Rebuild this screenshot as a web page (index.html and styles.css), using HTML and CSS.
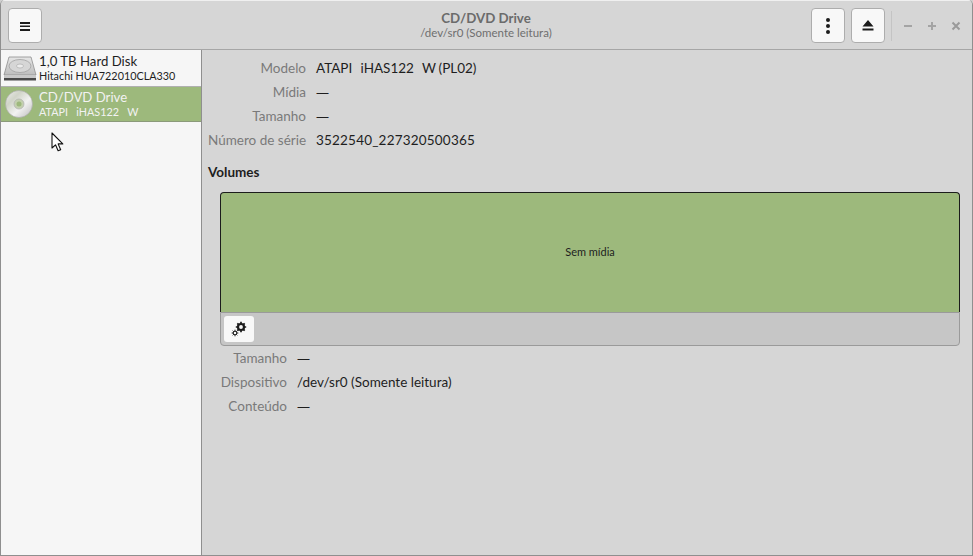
FILE: index.html
```html
<!DOCTYPE html>
<html lang="pt">
<head>
<meta charset="utf-8">
<title>CD/DVD Drive</title>
<link rel="stylesheet" href="styles.css">
</head>
<body>
<div class="window">
  <header class="titlebar">
    <button class="btn">
      <svg width="12" height="12" viewBox="0 0 12 12"><path d="M1 2h10v2H1zM1 5.500h10v1.500H1zM1 9h10v2H1z" fill="#1c1c1c"/></svg>
    </button>
    <div class="title">
      <div class="title-main">CD/DVD Drive</div>
      <div class="title-sub">/dev/sr0 (Somente leitura)</div>
    </div>
    <button class="btn">
      <svg width="6" height="18" viewBox="0 0 6 18"><circle cx="3" cy="3" r="2" fill="#1c1c1c"/><circle cx="3" cy="9" r="2" fill="#1c1c1c"/><circle cx="3" cy="15" r="2" fill="#1c1c1c"/></svg>
    </button>
    <button class="btn">
      <svg width="12" height="11" viewBox="0 0 12 11"><path d="M6 0l5.500 6.500H.500z M.500 8.500h11V10.500H.500z" fill="#1c1c1c"/></svg>
    </button>
    <div class="sep"></div>
    <div class="wm">
      <svg width="10" height="10" viewBox="0 0 10 10"><path d="M1 4h8v2H1z" fill="#a4a4a4"/></svg>
      <svg width="10" height="10" viewBox="0 0 10 10"><path d="M1 4h3V1h2v3h3v2H6v3H4V6H1z" fill="#a4a4a4"/></svg>
      <svg width="10" height="10" viewBox="0 0 10 10"><path d="M1.500 1.500l7 7M8.500 1.500l-7 7" stroke="#9a9a9a" stroke-width="2"/></svg>
    </div>
  </header>
  <div class="body">
    <aside class="sidebar">
      <div class="drive">
        <svg class="drive-icon" width="34" height="28" viewBox="0 0 34 28">
          <defs><linearGradient id="hd" x1="0" y1="0" x2="0" y2="1"><stop offset="0" stop-color="#e6e6e6"/><stop offset="1" stop-color="#bdbdbd"/></linearGradient></defs>
          <path d="M6 3h22l5 18H1z" fill="url(#hd)" stroke="#8e8e8e" stroke-width=".8"/>
          <ellipse cx="17" cy="12" rx="11" ry="6.500" fill="#d6d6d6" stroke="#a2a2a2" stroke-width=".8"/>
          <ellipse cx="17" cy="12" rx="3.500" ry="2" fill="#ececec" stroke="#a2a2a2" stroke-width=".6"/>
          <path d="M1 21h32v4.500H1z" fill="#c8c8c8"/>
          <path d="M1 24h32v2.500H1z" fill="#4a4a4a"/>
        </svg>
        <div class="drive-text">
          <div class="drive-name">1,0 TB Hard Disk</div>
          <div class="drive-sub">Hitachi HUA722010CLA330</div>
        </div>
      </div>
      <div class="drive selected">
        <svg class="drive-icon" width="34" height="28" viewBox="0 0 34 28">
          <defs><linearGradient id="cd" x1="0" y1="0" x2="1" y2="1"><stop offset="0" stop-color="#efefef"/><stop offset=".3" stop-color="#d0d4c8"/><stop offset=".6" stop-color="#f2f2f2"/><stop offset="1" stop-color="#bcbcbc"/></linearGradient></defs>
          <circle cx="16" cy="14" r="13.500" fill="url(#cd)" stroke="#a8a8a8" stroke-width=".6"/>
          <circle cx="16" cy="14" r="5" fill="#c3d0ae" stroke="#b4b4b4" stroke-width=".8"/>
          <circle cx="16" cy="14" r="2.500" fill="#9db87c"/>
        </svg>
        <div class="drive-text">
          <div class="drive-name">CD/DVD Drive</div>
          <div class="drive-sub">ATAPI&nbsp;&nbsp; iHAS122&nbsp;&nbsp; W</div>
        </div>
      </div>
      <svg class="cursor" width="14" height="21" viewBox="0 0 14 21"><path d="M1 1v15l3.500-3.200 2.600 6 2.600-1.100-2.600-5.800h4.700z" fill="#fff" stroke="#111" stroke-width="1.100" stroke-linejoin="round"/></svg>
    </aside>
    <main class="content">
      <dl class="props top-props">
        <dt>Modelo</dt><dd class="model">ATAPI&nbsp;&nbsp; iHAS122&nbsp;&nbsp; W (PL02)</dd>
        <dt>Mídia</dt><dd class="dash">—</dd>
        <dt>Tamanho</dt><dd class="dash">—</dd>
        <dt>Número de série</dt><dd class="serial">3522540_227320500365</dd>
      </dl>
      <h2 class="heading">Volumes</h2>
      <section class="volumes">
        <div class="volume-map">Sem mídia</div>
        <div class="volume-bar">
          <button class="tool">
            <svg width="16" height="16" viewBox="0 0 16 16">
              <g fill="none" stroke="#1c1c1c">
                <circle cx="10" cy="6" r="3" stroke-width="2.200"/>
                <path d="M10 .8v2M10 9.200v2M4.800 6h2M13.200 6h2M6.300 2.300l1.400 1.400M12.300 8.300l1.400 1.400M13.700 2.300l-1.400 1.400M7.700 8.300l-1.400 1.400" stroke-width="1.700"/>
                <circle cx="4" cy="12" r="1.800" stroke-width="1.100"/>
                <path d="M4 8.700v1.300M4 14v1.300M.7 12H2M6 12h1.300M1.700 9.700l.9.900M5.400 13.400l.9.900M6.300 9.700l-.9.900M2.600 13.400l-.9.900" stroke-width="1"/>
              </g>
            </svg>
          </button>
        </div>
      </section>
      <dl class="props bottom-props">
        <dt>Tamanho</dt><dd class="dash">—</dd>
        <dt>Dispositivo</dt><dd>/dev/sr0 (Somente leitura)</dd>
        <dt>Conteúdo</dt><dd class="dash">—</dd>
      </dl>
    </main>
  </div>
</div>
</body>
</html>
```
FILE: styles.css
```css
* { box-sizing: border-box; }
html, body { margin: 0; height: 100%; }
body {
  background: #cfcfcf;
  font-family: Lato, "Noto Sans", sans-serif;
  font-size: 13.500px;
  color: #1e1e1e;
  overflow: hidden;
}
.window {
  width: 973px;
  height: 556px;
  display: flex;
  flex-direction: column;
  border: 1px solid #8f8f8f;
  border-top: 0;
  border-radius: 5px 5px 0 0;
  overflow: hidden;
  background: #d6d6d6;
}
.titlebar {
  height: 50px;
  flex: none;
  display: flex;
  align-items: center;
  padding: 1px 11px 0 7px;
  background: #d6d6d6;
  border-top: 1px solid #f0f0f0;
  border-bottom: 1px solid #a6a6a6;
}
.btn {
  width: 34px;
  height: 35px;
  margin: 0 0 0 6px;
  padding: 0;
  display: flex;
  align-items: center;
  justify-content: center;
  background: #f8f8f8;
  border: 1px solid #adadad;
  border-radius: 4px;
}
.titlebar > .btn:first-child { margin-left: 0; }
.title {
  flex: 1;
  text-align: center;
  padding-left: 125px;
  margin-top: -3px;
}
.title-main { font-weight: 700; font-size: 13.300px; line-height: 16px; color: #6b6b6b; }
.title-sub { font-size: 11.500px; line-height: 13px; color: #6f6f6f; }
.sep { width: 1px; height: 30px; margin-left: 6px; background: #c4c4c4; }
.wm {
  display: flex;
  align-items: center;
  gap: 14px;
  margin-left: 11px;
}
.body { flex: 1; display: flex; min-height: 0; }
.sidebar {
  position: relative;
  width: 201px;
  flex: none;
  background: #f6f6f6;
  border-right: 1px solid #8f8f8f;
}
.drive {
  height: 37px;
  display: flex;
  align-items: center;
  padding-left: 2px;
  border-bottom: 1px solid #b0b0b0;
}
.drive-icon { flex: none; margin-right: 2px; }
.drive-text { min-width: 0; }
.drive-name { font-size: 13.200px; line-height: 15px; color: #1e1e1e; }
.drive-sub { font-size: 10.800px; line-height: 13px; color: #1e1e1e; white-space: nowrap; }
.selected { height: 35px; background: #9db97c; border-bottom-color: #8b9a7a; }
.selected .drive-name, .selected .drive-sub { color: #f2f2f2; }
.cursor { position: absolute; left: 50px; top: 82px; }
.content { flex: 1; min-width: 0; padding: 6px 12px 0 6px; }
.props {
  display: grid;
  margin: 0;
  column-gap: 10px;
  grid-auto-rows: 24px;
  align-items: center;
}
.props dt { text-align: right; color: #7a7a7a; white-space: nowrap; }
.props dd { margin: 0; color: #1e1e1e; white-space: nowrap; }
.props .model { word-spacing: -.700px; }
.props .serial { letter-spacing: .2px; }
.props .dash { font-family: "Noto Sans", sans-serif; font-size: 13px; }
.top-props { grid-template-columns: 98px 1fr; }
.bottom-props { grid-template-columns: 79px 1fr; }
.heading { margin: 11px 0 11px; font-size: 13.500px; line-height: 18px; font-weight: 700; color: #1e1e1e; }
.volumes {
  margin: 0 0 0 12px;
  height: 154px;
  display: flex;
  flex-direction: column;
}
.volume-map {
  height: 120px;
  flex: none;
  padding-bottom: 2px;
  display: flex;
  align-items: center;
  justify-content: center;
  background: #9db97c;
  border: 1px solid #1c1c1c;
  border-bottom: 0;
  border-radius: 4px 4px 0 0;
  font-size: 11px;
  color: #1e1e1e;
}
.volume-bar {
  flex: 1;
  display: flex;
  align-items: center;
  padding: 0 0 1px 3px;
  background: #c6c6c6;
  border: 1px solid #9a9a9a;
  border-radius: 0 0 4px 4px;
}
.tool {
  width: 30px;
  height: 26px;
  padding: 0;
  display: flex;
  align-items: center;
  justify-content: center;
  background: #f8f8f8;
  border: 0;
  border-radius: 3px;
}
```
